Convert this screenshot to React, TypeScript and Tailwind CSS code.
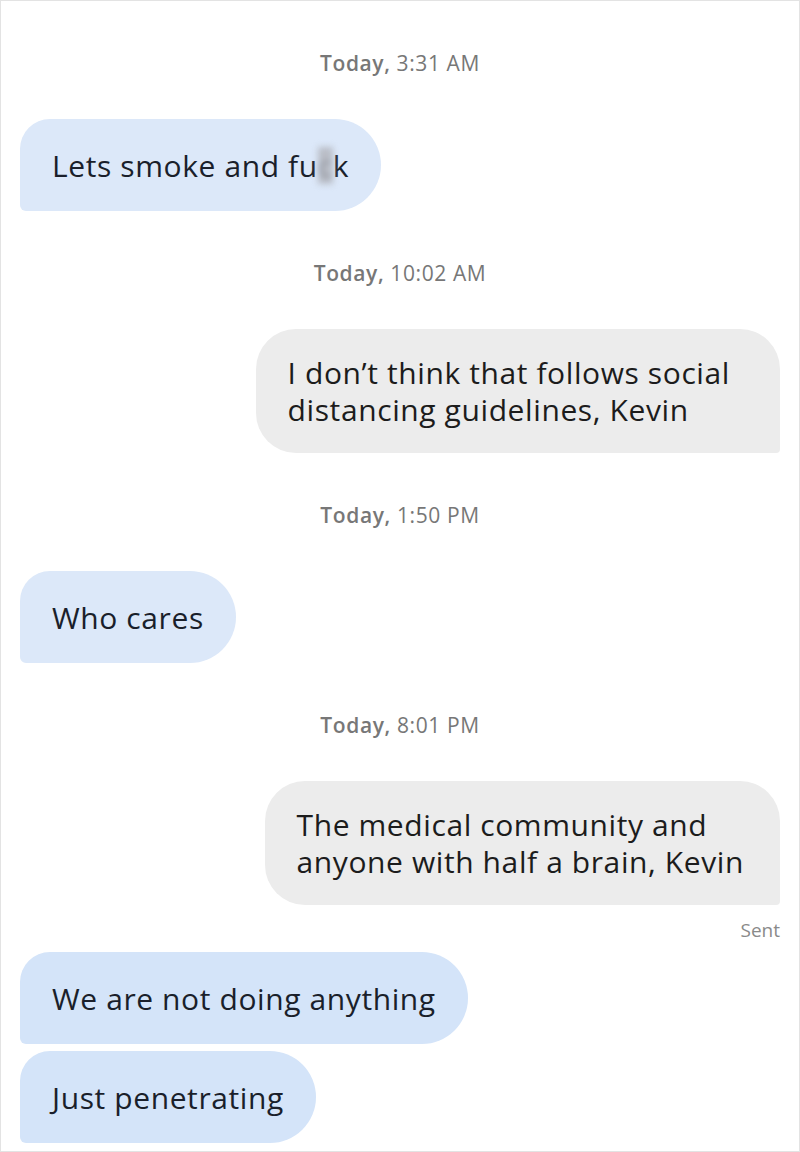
import React from "react";

const BODY = { fontFamily: '"Open Sans", "Liberation Sans", Arial, sans-serif' };

function Timestamp({ day, time }: { day: string; time: string }) {
  return (
    <div
      className="mt-[50px] mb-[44px] text-center text-[21px] leading-[24px] tracking-[0.6px] text-[#777777]"
      style={BODY}
    >
      <span className="font-semibold">{day},</span> <span className="font-medium">{time}</span>
    </div>
  );
}

function Incoming({ children, deep }: { children: React.ReactNode; deep?: boolean }) {
  return (
    <div className="flex justify-start">
      <div
        className={`${deep ? "bg-[#d4e4f9]" : "bg-[#dce8f9]"} rounded-tl-[30px] rounded-bl-[6px] rounded-tr-[46px] rounded-br-[46px] px-[32px] pt-[28px] pb-[27px] text-[30px] leading-[37px] tracking-[0.6px] text-[#1a1f2b]`}
        style={BODY}
      >
        {children}
      </div>
    </div>
  );
}

function Outgoing({ lines, wide }: { lines: string[]; wide?: boolean }) {
  return (
    <div className="flex justify-end">
      <div
        className={`${wide ? "pr-[50px]" : "pr-[36px]"} bg-[#ececec] rounded-[40px] rounded-br-[4px] pl-[32px] py-[25px] text-[30px] leading-[37px] tracking-[0.6px] text-[#1c1c1c]`}
        style={BODY}
      >
        {lines.map((l, i) => (
          <div key={i} className="whitespace-nowrap">
            {l}
          </div>
        ))}
      </div>
    </div>
  );
}

export default function App() {
  return (
    <div className="w-[800px] h-[1152px] bg-white border border-[#e3e3e3] px-[19px] overflow-hidden">
      <Timestamp day="Today" time="3:31 AM" />
      <Incoming>
        Lets smoke and fu
        <span className="inline-block blur-[3px] text-[#8a8f99] bg-[#b9bdc6]">c</span>k
      </Incoming>

      <Timestamp day="Today" time="10:02 AM" />
      <Outgoing wide lines={["I don’t think that follows social", "distancing guidelines, Kevin"]} />

      <Timestamp day="Today" time="1:50 PM" />
      <Incoming>Who cares</Incoming>

      <Timestamp day="Today" time="8:01 PM" />
      <Outgoing lines={["The medical community and", "anyone with half a brain, Kevin"]} />

      <div className="mt-[14px] mb-[11px] text-right text-[19px] leading-[22px] text-[#8a8a8a]" style={BODY}>
        Sent
      </div>

      <div className="flex flex-col gap-[7px]">
        <Incoming deep>We are not doing anything</Incoming>
        <Incoming deep>Just penetrating</Incoming>
      </div>
    </div>
  );
}
